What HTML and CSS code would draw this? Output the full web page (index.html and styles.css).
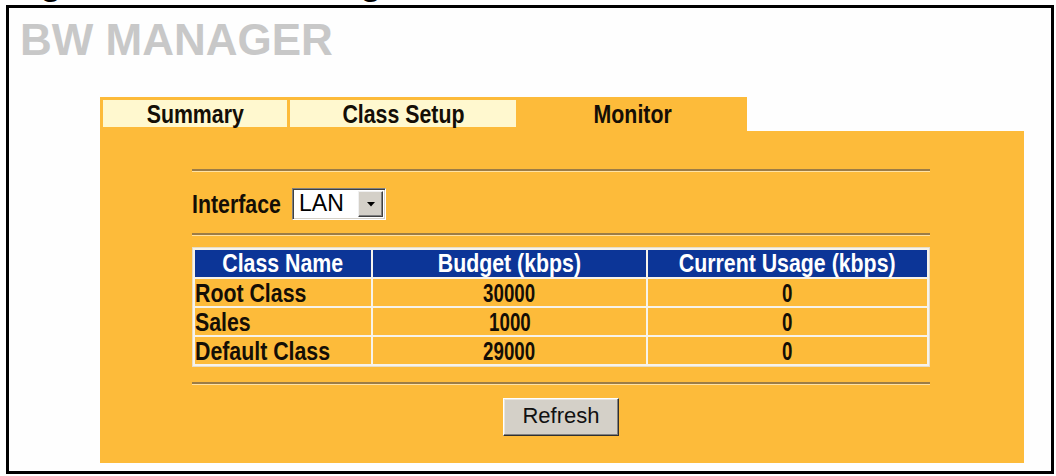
FILE: index.html
```html
<!DOCTYPE html>
<html>
<head>
<meta charset="utf-8">
<title>BW Manager - Monitor</title>
<link rel="stylesheet" href="styles.css">
</head>
<body>
<div class="caption"><span>Figure 124 BW Manager: Monitor</span></div>
<div class="frame">
  <div class="title">BW MANAGER</div>
  <div class="tabs">
    <div class="tab tab-summary"><span class="nt">Summary</span></div>
    <div class="tab tab-class"><span class="nt">Class Setup</span></div>
    <div class="tab tab-active"><span class="nt">Monitor</span></div>
  </div>
  <div class="panel">
    <div class="content">
      <div class="rule rule1"></div>
      <div class="iface">
        <span class="label"><span class="nt nt-left">Interface</span></span>
        <div class="select">
          <span class="val">LAN</span>
          <span class="arrow"><svg width="8" height="5" viewBox="0 0 8 5"><path d="M0 0H8L4 4.5Z" fill="#000"/></svg></span>
        </div>
      </div>
      <div class="rule rule2"></div>
      <table class="grid">
        <tr class="head">
          <th class="c1"><span class="nt">Class Name</span></th>
          <th class="c2"><span class="nt">Budget (kbps)</span></th>
          <th class="c3"><span class="nt">Current Usage (kbps)</span></th>
        </tr>
        <tr><td class="name"><span class="nt nt-left">Root Class</span></td><td class="num"><span class="nd">30000</span></td><td class="num"><span class="nd">0</span></td></tr>
        <tr><td class="name"><span class="nt nt-left">Sales</span></td><td class="num"><span class="nd">1000</span></td><td class="num"><span class="nd">0</span></td></tr>
        <tr><td class="name"><span class="nt nt-left">Default Class</span></td><td class="num"><span class="nd">29000</span></td><td class="num"><span class="nd">0</span></td></tr>
      </table>
      <div class="rule rule3"></div>
      <div class="btnrow"><button class="btn">Refresh</button></div>
    </div>
  </div>
</div>
</body>
</html>
```
FILE: styles.css
```css
html, body {
  margin: 0;
  padding: 0;
  background: #ffffff;
}
body {
  font-family: "Liberation Sans", Arial, sans-serif;
  color: #140e06;
}
.caption {
  height: 5px;
  overflow: hidden;
}
.caption span {
  display: block;
  margin-top: -36px;
  padding-left: 8px;
  font-weight: bold;
  font-size: 36px;
  line-height: 36px;
  color: #000;
  white-space: nowrap;
}
.frame {
  margin: 0 2px 0 6px;
  border: 3px solid #000;
  height: 463px;
  overflow: hidden;
  background: #fefefe;
}
.title {
  margin: 10px 0 0 11px;
  height: 44px;
  font-weight: bold;
  font-size: 44px;
  line-height: 44px;
  color: #c8c8c8;
}
.nt {
  display: inline-block;
  transform: scaleX(0.82);
  transform-origin: center;
  white-space: nowrap;
}
.nt-left {
  transform-origin: left center;
}
.nd {
  display: inline-block;
  transform: scaleX(0.72);
  transform-origin: center;
}
.tabs {
  margin: 35px 0 0 91px;
  width: 647px;
  height: 34px;
  box-sizing: border-box;
  padding: 3px 0 0 3px;
  display: flex;
  gap: 3px;
  background: #fdbb3a;
}
.tab {
  height: 27px;
  box-sizing: border-box;
  padding-top: 2px;
  line-height: 24px;
  text-align: center;
  background: #fff8cf;
  font-weight: bold;
  font-size: 26px;
  white-space: nowrap;
}
.tab-summary { width: 184px; }
.tab-class { width: 226px; }
.tab-active {
  flex: 1;
  height: auto;
  background: transparent;
}
.panel {
  margin-left: 91px;
  width: 924px;
  height: 332px;
  box-sizing: border-box;
  padding-left: 92px;
  background: #fdbb3a;
  overflow: hidden;
}
.content {
  width: 738px;
}
.rule {
  border-top: 2px solid #9c7c46;
  border-bottom: 1px solid #ffe2a4;
}
.rule1 { margin-top: 38px; }
.rule2 { margin-top: 13px; }
.rule3 { margin-top: 15px; }
.iface {
  margin-top: 16px;
  height: 32px;
  display: flex;
  align-items: center;
}
.label {
  width: 90px;
  font-weight: bold;
  font-size: 26px;
  line-height: 32px;
  white-space: nowrap;
}
.select {
  margin-left: 10px;
  width: 94px;
  height: 32px;
  box-sizing: border-box;
  display: flex;
  background: #ffffff;
  border: 1px solid;
  border-color: #808080 #ffffff #ffffff #808080;
  box-shadow: inset 1px 1px #404040, inset -1px -1px #d4d0c8;
}
.val {
  flex: 1;
  padding-left: 6px;
  font-size: 23px;
  line-height: 28px;
  color: #000;
}
.arrow {
  width: 25px;
  margin: 2px 2px 2px 0;
  box-sizing: border-box;
  background: #d4d0c8;
  border: 1px solid;
  border-color: #f0f0f0 #404040 #404040 #f0f0f0;
  box-shadow: inset -1px -1px #808080;
  display: flex;
  align-items: center;
  justify-content: center;
}
.grid {
  margin-top: 11px;
  width: 738px;
  border-collapse: separate;
  border-spacing: 2px;
  border: 1px solid #e6ddca;
  background: #f7f3ea;
  font-weight: bold;
  font-size: 26px;
}
.grid th {
  height: 27px;
  padding: 0;
  line-height: 27px;
  background: #0c3597;
  color: #ffffff;
  font-weight: bold;
  text-align: center;
  white-space: nowrap;
}
.grid td {
  height: 27px;
  box-sizing: border-box;
  padding: 1px 0 0 0;
  line-height: 26px;
  background: #fdbb3a;
  white-space: nowrap;
}
.c1 { width: 176px; }
.c2 { width: 273px; }
.grid td.name { text-align: left; }
.grid td.num { text-align: center; }
.btnrow {
  margin-top: 13px;
  text-align: center;
}
.btn {
  width: 116px;
  height: 38px;
  padding: 0 0 2px 0;
  background: #d4d0c8;
  border: 1px solid;
  border-color: #ffffff #303030 #303030 #ffffff;
  box-shadow: inset -1px -1px #808080, inset 1px 1px #e8e6e0;
  font-family: "Liberation Sans", Arial, sans-serif;
  font-size: 22px;
  color: #111;
}
```
